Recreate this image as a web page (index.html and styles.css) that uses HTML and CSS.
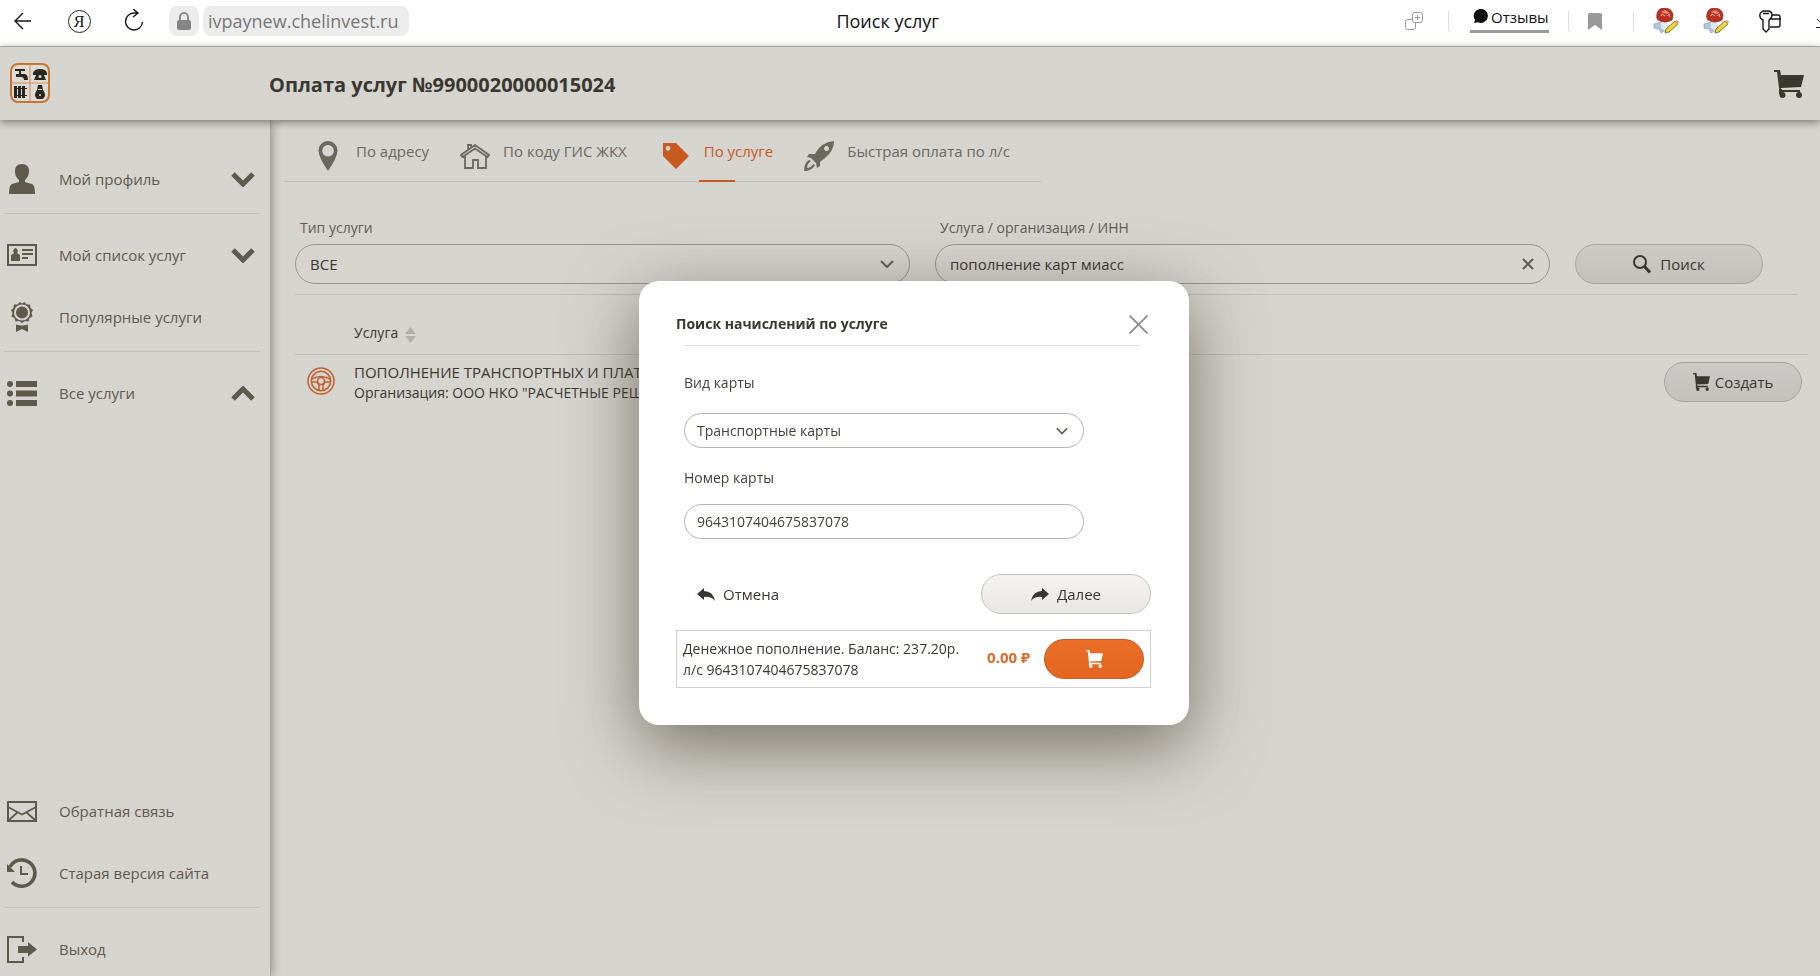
FILE: index.html
```html
<!DOCTYPE html>
<html lang="ru">
<head>
<meta charset="utf-8">
<title>Поиск услуг</title>
<link rel="stylesheet" href="styles.css">
</head>
<body>
<svg class="defs" aria-hidden="true">
  <symbol id="cart" viewBox="0 0 30 28"><path d="M0 0h6l1 5h23l-3 12-20 1v2H26v2H7L5 18 3 2H0z"/><circle cx="8.500" cy="25" r="3"/><circle cx="25" cy="25" r="3"/><path d="M5 19h3v5H5z"/></symbol>
  <symbol id="chev" viewBox="0 0 24 15"><path d="M2 2l10 10L22 2" fill="none" stroke="currentColor" stroke-width="5"/></symbol>
  <symbol id="thin" viewBox="0 0 14 8"><path d="M1 1l6 6 6-6" fill="none" stroke="currentColor" stroke-width="2"/></symbol>
  <symbol id="ext" viewBox="0 0 26 26"><path d="M1 16l7-2 6 3 3 7-6-1-3 2-2-4-5-1z" fill="#b4c5de" stroke="#8291aa" stroke-width=".6"/><path d="M8 13l5-1 2 6-3 5-4-3z" fill="#dfe8f4"/><path d="M4 6Q5 0 11 0q8 0 9 7l-1 5q-7 4-14 0-2-2-1-6z" fill="#b93221" stroke="#7f2416" stroke-width=".7"/><path d="M8 4l4-2 5 3-4 1z" fill="#e78d76"/><path d="M8 8l1-2 3 2M14 8l2-2 1 3" stroke="#f0b5a4" fill="none"/><path d="M12 25l1-4 9-8 3 3-9 8z" fill="#ecd43b" stroke="#74601b" stroke-width=".8"/><path d="M22 13l2-1 2 2-1 2z" fill="#e79b96"/></symbol>
  <symbol id="reply" viewBox="0 0 18 13"><path d="M0 6l7-6v3q9 0 11 10-4-5-11-4v3z"/></symbol>
</svg>
<div class="browser">
  <button class="nav" aria-label="Назад"><svg width="18" height="18" viewBox="0 0 18 18" class="line"><path d="M17 9H1M9 1L1 9l8 8"/></svg></button>
  <button class="nav ya" aria-label="Яндекс"><span>Я</span></button>
  <button class="nav" aria-label="Обновить"><svg width="20" height="24" viewBox="0 0 20 24" class="line"><path d="M13 4H10A8.500 8.500 0 1 0 18.500 13M9 0l5 4-5 4"/></svg></button>
  <div class="address"><span class="lock"><svg width="14" height="19" viewBox="0 0 14 19"><path d="M3 9V5a4 4 0 0 1 8 0v4" fill="none" stroke="#8b8b8b" stroke-width="2"/><rect y="8" width="14" height="10" rx="2" fill="#858585"/></svg></span><span class="url">ivpaynew.chelinvest.ru</span></div>
  <div class="pagename">Поиск услуг</div>
  <div class="tools">
    <svg width="18" height="18" viewBox="0 0 18 18" fill="none" stroke="#999"><rect x="7.500" y=".5" width="10" height="10" rx="2"/><path d="M12.500 3v5M10 5.500h5M7 7.500H2.500a2 2 0 0 0-2 2v6a2 2 0 0 0 2 2h6a2 2 0 0 0 2-2V11"/></svg>
    <i class="sep"></i>
    <a class="reviews" href="#"><svg width="15" height="15" viewBox="0 0 15 15"><path d="M7 0a7 7 0 1 1-2 13.300L1 14l1-3A7 7 0 0 1 7 0z"/></svg>Отзывы</a>
    <i class="sep"></i>
    <svg class="mark" width="14" height="17" viewBox="0 0 14 17"><path d="M2 0h10q2 0 2 2v15l-7-5-7 5V2q0-2 2-2z" fill="#999"/></svg>
    <i class="sep"></i>
    <svg class="mushroom" width="26" height="26"><use href="#ext"/></svg>
    <svg class="mushroom" width="26" height="26"><use href="#ext"/></svg>
    <svg width="23" height="23" viewBox="0 0 23 23" class="line"><path d="M4 1h6q3 1 3 4t-3 5v9l-3 3-3-3v-9Q0 8 1 4q1-2 3-3zM4 3.500h6M13 5h6q2 0 2 2v8q0 2-2 2h-8M11 9h11"/></svg>
    <svg class="down" width="4" height="16" viewBox="0 0 4 16" stroke="#222"><path d="M1 6l3 3M0 14.500h4"/></svg>
  </div>
</div>
<header class="header">
  <svg class="logo" width="40" height="40" viewBox="0 0 40 40"><rect x="1" y="1" width="38" height="38" rx="7" fill="#dedbd5" stroke="#c47530" stroke-width="2"/><path d="M20 1v38M1 20h38" stroke="#d28b54"/><g fill="#29261f"><path d="M5 6h10v2h-4v3h4q3 1 3 6h-4q0-3-3-3H6v-3h3V8H5zM23 10q1-4 7-4t7 4v2h-4v-2h-6v2h-4zM27 10h6l3 7H24z"/><path d="M4 23h3v12H4zM8 23h3v12H8zM12 23h3v12h-3zM5 25h12v1H5zM5 32h12v1H5zM28 22h4l1 5q4 5 0 9h-6q-4-4 0-9z"/><path d="M28 26h4v1h-4z" fill="#ded9d0"/><circle cx="30" cy="13.500" r="1.500" fill="#ded9d0"/><circle cx="30" cy="32" r="1" fill="#ded9d0"/></g></svg>
  <h1>Оплата услуг №9900020000015024</h1>
  <button class="cart" aria-label="Корзина"><svg width="30" height="28"><use href="#cart"/></svg></button>
</header>
<div class="body">
  <nav class="sidebar">
    <a href="#"><span class="ico"><svg width="26" height="30" viewBox="0 0 26 30"><path d="M13 0c5 0 7 3 7 7 0 5-2 7-4 9v2l7 2q3 1 3 10H0q0-9 3-10l7-2v-2c-2-2-4-4-4-9 0-4 2-7 7-7z"/></svg></span>Мой профиль<svg class="chev" width="24" height="15"><use href="#chev"/></svg></a>
    <hr>
    <a href="#"><span class="ico"><svg width="30" height="22" viewBox="0 0 30 22"><path d="M1 1h28v20H1z" fill="none" stroke="currentColor" stroke-width="2"/><path d="M8.500 4a2.800 3 0 0 1 1.500 5l3 2v6H4v-6l3-2a2.800 3 0 0 1 1.500-5zM15 5h11v2H15zM15 9h11v2H15zM15 13h6v2h-6z"/></svg></span>Мой список услуг<svg class="chev" width="24" height="15"><use href="#chev"/></svg></a>
    <a href="#"><span class="ico"><svg width="22" height="30" viewBox="0 0 22 30"><path d="M5 22.500q6 2 12 0V30l-6-3-6 3z"/><path d="M11 1.500L13.500 0l2 2.500h3.500l.5 3.500 2.500 2-1.500 3 1 3.500-3 1.500-1 3.500-3.500-.5L11 21l-3-2-3.500.5-1-3.500-3-1.500L1.500 11 0 8l2.500-2L3 2.500h3.500l2-2.500z"/><circle cx="11" cy="10.500" r="7" fill="none" stroke="#d5d4cf" stroke-width="2"/></svg></span>Популярные услуги</a>
    <hr>
    <a href="#"><span class="ico"><svg width="30" height="25" viewBox="0 0 30 25"><path d="M9 0h21v6H9zM9 9.500h21v6H9zM9 19h21v6H9z"/><circle cx="3" cy="3" r="3"/><circle cx="3" cy="12.500" r="3"/><circle cx="3" cy="22" r="3"/></svg></span>Все услуги<svg class="chev up" width="24" height="15"><use href="#chev"/></svg></a>
    <div class="bottom">
      <a href="#"><span class="ico"><svg width="30" height="21" viewBox="0 0 30 21" fill="none" stroke="currentColor" stroke-width="2"><path d="M1 1h28v19H1z"/><path d="M1 6l14 7.500L29 6M2 19l9-8M28 19l-9-8" stroke-width="1.700"/></svg></span>Обратная связь</a>
      <a href="#"><span class="ico"><svg width="30" height="30" viewBox="0 0 30 30" fill="none" stroke="currentColor"><path d="M3 9A13.200 13.200 0 1 1 5 24" stroke-width="3.600"/><path d="M14 8v8h7" stroke-width="2"/><path d="M0 6v8h8z" fill="currentColor" stroke="none"/></svg></span>Старая версия сайта</a>
      <hr>
      <a href="#"><span class="ico"><svg width="30" height="27" viewBox="0 0 30 27"><path d="M16 6V1H1v25h15v-5" fill="none" stroke="currentColor" stroke-width="2"/><path d="M11 10h10V6l9 7.500-9 7V17H11z"/></svg></span>Выход</a>
    </div>
  </nav>
  <main class="main">
    <div class="tabs">
      <a href="#"><svg width="20" height="30" viewBox="0 0 20 30"><path fill-rule="evenodd" d="M10 0a9.500 9.500 0 0 1 9.500 10Q19 17 10 30 1 17 .5 10A9.500 9.500 0 0 1 10 0zm0 4a5.800 5.800 0 1 0 .1 0z"/></svg><span>По адресу</span></a>
      <a href="#"><svg width="30" height="30" viewBox="0 0 30 30" fill="none" stroke="currentColor"><path d="M8 8V4h3v2M5 15v12h8v-8h5v8h8V15M15 4l14 10-1.500 2L15 7.500 2.500 16 1 14z" stroke-width="1.800"/></svg><span>По коду ГИС ЖКХ</span></a>
      <a href="#" class="active"><svg width="26" height="30" viewBox="0 0 26 30"><path fill-rule="evenodd" d="M0 2h13l13 13-13 13L0 15zm5 3a2.400 2.400 0 1 0 .1 0z"/></svg><span>По услуге</span></a>
      <a href="#"><svg width="30" height="30" viewBox="0 0 30 30"><path fill-rule="evenodd" d="M30 0q0 10-9 17l-5 4 0 4-3 2-1-5-5-5-4-1 2-3 6 0Q17 1 30 0zm-7.500 5a2.500 2.500 0 1 0 .1 0z"/><path d="M5 19l2 1q-4 3-4 7 5-1 6-4l2 1q-3 6-11 6 0-8 5-11z"/></svg><span>Быстрая оплата по л/с</span></a>
    </div>
    <form class="search">
      <div class="field"><label for="type">Тип услуги</label><div class="control"><select id="type"><option>ВСЕ</option></select><svg width="14" height="8"><use href="#thin"/></svg></div></div>
      <div class="field"><label for="query">Услуга / организация / ИНН</label><div class="control"><input id="query" type="text" value="пополнение карт миасс"><button type="button" class="clear" aria-label="Очистить"><svg width="12" height="12" viewBox="0 0 12 12"><path d="M1 1l10 10M11 1L1 11" stroke="currentColor" stroke-width="2"/></svg></button></div></div>
      <button type="button" class="btn find"><svg width="18" height="19" viewBox="0 0 18 19" fill="none" stroke="currentColor"><circle cx="7" cy="7" r="6" stroke-width="2"/><path d="M11 11l6 6.500" stroke-width="3"/></svg>Поиск</button>
    </form>
    <table class="results">
      <thead><tr><th></th><th>Услуга <svg width="11" height="16" viewBox="0 0 11 16" fill="#b0afab"><path d="M0 7h11L5.500 0zM0 9h11l-5.500 7z"/></svg></th><th></th></tr></thead>
      <tbody><tr>
        <td class="wheel"><svg width="28" height="28" viewBox="0 0 28 28" fill="none" stroke="#c4602f" stroke-width="1.500"><circle cx="14" cy="14" r="13"/><circle cx="14" cy="14" r="9.700"/><circle cx="14" cy="14" r="3.500"/><path d="M5 12q9-5 18 0M5 15l5 0 2 3v6M23 15l-5 0-2 3v6"/></svg></td>
        <td class="name"><b>ПОПОЛНЕНИЕ ТРАНСПОРТНЫХ И ПЛАТ</b><small>Организация: ООО НКО "РАСЧЕТНЫЕ РЕШ</small></td>
        <td class="action"><button class="btn create"><svg width="17" height="18" viewBox="0 0 30 28" preserveAspectRatio="none"><use href="#cart"/></svg>Создать</button></td>
      </tr></tbody>
    </table>
  </main>
</div>
<div class="overlay">
  <section class="modal" role="dialog" aria-labelledby="dlg">
    <div class="modal-head"><h2 id="dlg">Поиск начислений по услуге</h2><button class="close" aria-label="Закрыть"><svg width="19" height="19" viewBox="0 0 19 19"><path d="M.5.5l18 18M18.500.5l-18 18" stroke="#8a8780" stroke-width="1.600"/></svg></button></div>
    <div class="fields">
      <label for="kind">Вид карты</label>
      <div class="control"><select id="kind"><option>Транспортные карты</option></select><svg width="12" height="8"><use href="#thin"/></svg></div>
      <label for="number">Номер карты</label>
      <div class="control"><input id="number" type="text" value="9643107404675837078"></div>
    </div>
    <div class="actions"><button class="cancel"><svg width="18" height="13"><use href="#reply"/></svg>Отмена</button><button class="btn next"><svg class="flip" width="18" height="13"><use href="#reply"/></svg>Далее</button></div>
    <div class="charge"><p>Денежное пополнение. Баланс: 237.20р.<br>л/с 9643107404675837078</p><strong>0.00 ₽</strong><button class="pay" aria-label="В корзину"><svg width="17" height="18" viewBox="0 0 30 28" preserveAspectRatio="none"><use href="#cart"/></svg></button></div>
  </section>
</div>
</body>
</html>
```
FILE: styles.css
```css
* { box-sizing: border-box; }
body { margin: 0; height: 100vh; overflow: hidden; display: flex; flex-direction: column; background: #d5d4cf; color: #3a372f; font: 15px/20px "Open Sans", "Noto Sans", sans-serif; }
svg { flex: none; display: block; }
svg:not([fill]) { fill: currentColor; }
svg.line { fill: none; stroke: #161616; stroke-width: 1.4; }
.defs { position: absolute; width: 0; height: 0; }
button, input, select { font: inherit; color: inherit; border: 0; background: none; margin: 0; padding: 0; }
button { cursor: pointer; }
a { color: inherit; text-decoration: none; }
hr { border: 0; margin: 0; height: 1px; background: #bfbeba; }

.browser { flex: none; height: 47px; display: flex; align-items: center; background: #fff; border-bottom: 1px solid #b4b5b8; padding: 0 0 4px 14px; color: #111; overflow: hidden; }
.nav { display: flex; justify-content: center; width: 24px; margin-right: 31px; flex: none; }
.nav:first-child { width: 18px; margin-right: 35px; }
.nav:nth-child(3) { margin-right: 23px; }
.ya span { width: 23px; height: 23px; border: 1px solid #222; border-radius: 50%; font: 16px/21px "Liberation Serif", serif; }
.address { display: flex; gap: 4px; color: #777; font-size: 18px; line-height: 30px; }
.lock { width: 30px; display: grid; place-items: center; background: #ececec; border-radius: 8px; }
.url { background: #ececec; border-radius: 8px; padding: 0 10px 0 5px; }
.pagename { flex: 1; text-align: center; font-size: 18px; padding-right: 38px; }
.tools { display: flex; align-items: center; flex: none; }
.sep { width: 1px; height: 20px; background: #ddd; margin: 0 21px 0 25px; }
.reviews { display: flex; gap: 3px; width: 79px; height: 24px; border-bottom: 3px solid #999; padding-left: 3px; line-height: 17px; }
.reviews + .sep { margin: 0 19px; }
.mark + .sep { margin: 0 19px 0 31px; }
.mushroom { margin-right: 24px; }
.mushroom + svg.line { margin: 0 34px 0 6px; }

.header { flex: none; height: 73px; display: flex; align-items: center; padding: 0 16px 2px 10px; box-shadow: 0 2px 8px rgba(60, 50, 40, .6); z-index: 2; background: #d5d4cf; }
.header h1 { margin: 0; padding: 4px 0 0 219px; font-size: 20px; line-height: 24px; flex: 1; }
.cart { padding-top: 3px; }

.body { flex: 1; min-height: 0; display: flex; }
.sidebar { width: 271px; flex: none; display: flex; flex-direction: column; padding: 28px 10px 0 4px; color: #5f594c; box-shadow: 2px 0 8px rgba(60, 50, 40, .35); overflow: hidden; border-right: 1px solid #aaa8a3; clip-path: inset(0 -12px 0 0); }
.sidebar a { flex: none; height: 62px; display: flex; align-items: center; }
.sidebar hr { flex: none; margin: 3px 0 10px; }
.ico { width: 36px; margin-right: 19px; display: flex; justify-content: center; }
.chev { margin-left: auto; margin-right: 5px; }
.up { transform: rotate(180deg); }
.bottom { margin-top: auto; margin-bottom: -4px; }

.main { flex: 1; min-width: 0; padding: 12px 12px 0 13px; }
.tabs { display: flex; align-items: flex-start; width: 757px; height: 50px; padding: 9px 0 0 34px; border-bottom: 1px solid #bfbeba; color: #6c685e; }
.tabs a { display: flex; gap: 13px; height: 41px; margin-right: 31px; white-space: nowrap; }
.tabs a:first-child { gap: 18px; }
.tabs a:nth-child(2) { margin-right: 36px; }
.tabs a.active { color: #c75a1e; position: relative; gap: 15px; }
.tabs a.active::after { content: ""; position: absolute; left: 36px; bottom: 0; width: 36px; height: 2px; background: #c75a1e; }
.search { display: flex; align-items: flex-end; gap: 25px; margin: 0 11px; padding: 36px 34px 10px 0; border-bottom: 1px solid #bfbeba; }
.field { flex: 1; }
label { font-size: 14px; }
.field label { display: block; padding-left: 5px; margin-bottom: 6px; color: #5f5c54; }
.control { display: flex; align-items: center; position: relative; }
.control input, .control select { appearance: none; width: 100%; height: 40px; border: 1px solid #96948f; border-radius: 20px; padding: 0 14px; outline: 0; }
.control > svg, .clear { position: absolute; right: 16px; color: #625f58; }
.btn { display: flex; align-items: center; justify-content: center; height: 40px; border: 1px solid #a6a49f; border-radius: 20px; background: linear-gradient(#cccac6, #c3c1bc); }
.find { width: 188px; gap: 9px; }
.results { width: calc(100% - 11px); margin-left: 11px; border-collapse: collapse; }
.results th { font-weight: 400; font-size: 14px; text-align: left; height: 59px; padding: 18px 0 0; border-bottom: 1px solid #bfbeba; }
.results th svg { display: inline-block; vertical-align: middle; margin-left: 3px; }
.results td { padding: 6px 0 0; vertical-align: top; white-space: nowrap; }
.results .wheel { width: 59px; padding: 12px 0 0 12px; }
.name b, .name small { display: block; font-weight: 400; font-size: 15px; line-height: 22px; }
.name small { font-size: 14px; line-height: 20px; }
.results .action { width: 144px; padding: 7px 6px 0 0; }
.create { width: 138px; gap: 5px; }

.overlay { position: fixed; inset: 0; z-index: 3; display: flex; justify-content: center; align-items: flex-start; padding: 281px 0 0 8px; }
.modal { width: 550px; padding: 32px 38px 37px 37px; background: #fff; border-radius: 20px; box-shadow: 0 20px 70px rgba(70, 60, 45, .65); }
.modal-head { display: flex; justify-content: space-between; padding-bottom: 10px; }
.modal-head h2 { margin: 0; font-size: 14px; line-height: 22px; }
.close { margin-right: 3px; }
.fields { border-top: 1px solid #e2e1df; margin: 0 10px 0 8px; padding: 27px 0 0; display: grid; color: #46423a; }
.fields label { line-height: 20px; margin-bottom: 20px; }
.fields .control { margin-bottom: 20px; width: 400px; font-size: 14px; }
.fields .control input, .fields .control select { height: 35px; border-color: #b5b4b1; padding: 0 12px; }
.fields label + .control:last-child { margin: -4px 0 0; }
.actions { display: flex; justify-content: space-between; margin-top: 35px; }
.cancel, .next { display: flex; align-items: center; gap: 8px; }
.cancel { margin-left: 21px; }
.next { width: 170px; background: linear-gradient(#f4f3f2, #e8e7e5); border-color: #c3c2bf; }
.flip { transform: scaleX(-1); }
.charge { display: flex; align-items: center; margin-top: 16px; border: 1px solid #cfcfcf; padding: 7px 6px; }
.charge p { margin: 0; flex: 1; font-size: 14px; line-height: 21px; white-space: nowrap; }
.charge strong { font-size: 15px; color: #e0682b; margin-right: 14px; padding-bottom: 4px; }
.pay { width: 100px; height: 40px; display: grid; place-items: center; color: #fff; border: 1px solid #c85a20; border-radius: 20px; background: linear-gradient(#ea6d28, #e26620); }
```
